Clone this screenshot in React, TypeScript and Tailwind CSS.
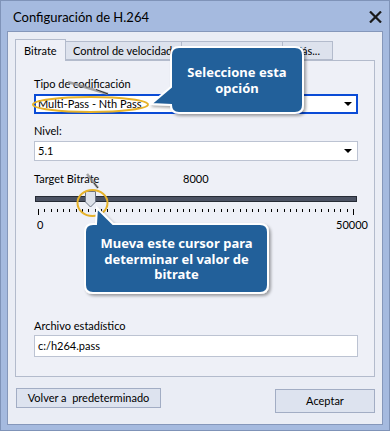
export default function App() {
  const ticks = Array.from({ length: 51 }, (_, i) => i);
  return (
    <div className="relative w-[390px] h-[431px] bg-[#a5badf] border border-[#7f93b8] flex flex-col font-['Lato',sans-serif] text-[11px] leading-[16px] text-black overflow-hidden">
      {/* Title bar */}
      <div className="h-[30px] shrink-0 flex items-center justify-between pl-[12px] pr-[7px]">
        <span className="text-[13px] leading-[20px] pt-[1px]">Configuración de H.264</span>
        <svg width="13" height="12" viewBox="0 0 13 12" className="mt-[2px]">
          <path d="M1 0.5 L12 11.5 M12 0.5 L1 11.5" stroke="#1a1a1a" strokeWidth="2.2" />
        </svg>
      </div>

      {/* Client area */}
      <div className="mx-[6px] mb-[5px] flex-1 bg-[#eaedf5] border border-[#8597ba] flex flex-col px-[7px] pt-[7px]">
        {/* Tabs */}
        <div className="h-[21px] flex items-end shrink-0">
          <div className="relative z-10 h-[22px] -mb-px w-[51px] bg-[#eef0f7] border border-b-0 border-[#b3bbcc] pl-[8px] pt-[3px]">Bitrate</div>
          <div className="h-[19px] w-[116px] bg-[#dde2ed] border border-l-0 border-[#b3bbcc] pl-[7px] pt-px whitespace-nowrap overflow-hidden">Control de velocidad</div>
          <div className="h-[19px] w-[101px] bg-[#dde2ed] border border-l-0 border-[#b3bbcc] pl-[7px] pt-px whitespace-nowrap overflow-hidden">Avanzado</div>
          <div className="h-[19px] w-[50px] bg-[#dde2ed] border border-l-0 border-[#b3bbcc] pl-[9px] pt-px whitespace-nowrap overflow-hidden">Más...</div>
        </div>

        {/* Tab panel */}
        <div className="h-[317px] shrink-0 bg-[#eef0f7] border border-[#b3bbcc] pl-[18px] pr-[15px] pt-[15px] flex flex-col">
          <div>Tipo de codificación</div>
          <div className="mt-[2px] h-[20px] w-[324px] bg-white border-2 border-[#0a4bd6] flex items-center justify-between pl-[2px] pr-[4px]">
            <span>Multi-Pass - Nth Pass</span>
            <svg width="8" height="4" viewBox="0 0 8 4"><path d="M0 0 H8 L4 4 Z" fill="#000" /></svg>
          </div>

          <div className="mt-[9px]">Nivel:</div>
          <div className="mt-[2px] h-[20px] w-[324px] bg-white border border-[#bcc3d2] flex items-center justify-between pl-[3px] pr-[5px]">
            <span>5.1</span>
            <svg width="8" height="4" viewBox="0 0 8 4"><path d="M0 0 H8 L4 4 Z" fill="#000" /></svg>
          </div>

          <div className="mt-[10px] flex">
            <span className="w-[149px]">Target Bitrate</span>
            <span>8000</span>
          </div>

          {/* Slider */}
          <div className="relative w-[324px] h-[30px]">
            <div className="mt-[9px] mx-[1px] h-[6px] bg-[#4b5263] border border-[#262b35]" />
            <div className="mt-[7px] flex justify-between items-start px-[4px]">
              {ticks.map((i) => (
                <div key={i} className={i === 0 || i === 50 ? "w-px h-[6px] bg-black" : "w-px h-[3px] bg-black"} />
              ))}
            </div>
            <svg width="11" height="17" viewBox="0 0 11 17" className="absolute left-[51px] top-[4px]">
              <path d="M0.5 0.5 H10.5 V11 L5.5 16 L0.5 11 Z" fill="#dde1e9" stroke="#6b7282" />
            </svg>
          </div>
          <div className="flex justify-between w-[334px] pl-[3px]">
            <span>0</span>
            <span>50000</span>
          </div>

          <div className="mt-[85px]">Archivo estadístico</div>
          <div className="mt-px h-[22px] w-[324px] bg-white border border-[#bcc3d2] flex items-center pl-[3px]">c:/h264.pass</div>
        </div>

        {/* Buttons */}
        <div className="mt-[11px] flex justify-between items-start pl-[1px]">
          <div className="h-[20px] w-[145px] bg-[#dde3ef] border border-[#a2adc4] flex items-center justify-center whitespace-pre">Volver a  predeterminado</div>
          <div className="mt-px h-[24px] w-[100px] bg-[#dde3ef] border border-[#a2adc4] flex items-center justify-center">Aceptar</div>
        </div>
      </div>

      {/* Annotation overlay */}
      <svg width="390" height="431" viewBox="0 0 390 431" className="absolute left-0 top-0 pointer-events-none">
        <defs>
          <filter id="sh" x="-10%" y="-10%" width="130%" height="130%">
            <feDropShadow dx="2" dy="2" stdDeviation="1.5" floodColor="#000" floodOpacity="0.35" />
          </filter>
        </defs>
        <ellipse cx="89.5" cy="103.5" rx="57.5" ry="7.5" fill="none" stroke="#e6b22a" strokeWidth="2" />
        <line x1="67" y1="81" x2="107" y2="93" stroke="#8a8a8a" strokeWidth="2.5" strokeOpacity="0.75" />
        <line x1="95" y1="88.5" x2="107" y2="93" stroke="#333" strokeWidth="1" />
        <ellipse cx="91.5" cy="202" rx="15" ry="13" fill="none" stroke="#e6b22a" strokeWidth="2" />
        <line x1="86" y1="173" x2="97" y2="187" stroke="#8a8a8a" strokeWidth="2.5" strokeOpacity="0.75" />
        <line x1="93" y1="182" x2="97" y2="187" stroke="#333" strokeWidth="1" />
        <path
          d="M178 46 H294 Q302 46 302 54 V104 Q302 112 294 112 H178 Q170 112 170 104 L150 103 L170 86 V54 Q170 46 178 46 Z"
          fill="#23609a"
          stroke="#fff"
          strokeWidth="2"
          filter="url(#sh)"
        />
        <path
          d="M92 223 H95 L96 207 L112 223 H259 Q267 223 267 231 V284 Q267 292 259 292 H92 Q84 292 84 284 V231 Q84 223 92 223 Z"
          fill="#23609a"
          stroke="#fff"
          strokeWidth="2"
          filter="url(#sh)"
        />
      </svg>
      <div className="absolute left-[170px] top-[63px] w-[132px] text-center text-white font-bold text-[13px] leading-[16px] font-['Noto_Sans',sans-serif]">
        Seleccione esta<br />opción
      </div>
      <div className="absolute left-[84px] top-[235px] w-[183px] text-center text-white font-bold text-[13px] leading-[15.5px] font-['Noto_Sans',sans-serif]">
        Mueva este cursor para<br />determinar el valor de<br />bitrate
      </div>
    </div>
  );
}
